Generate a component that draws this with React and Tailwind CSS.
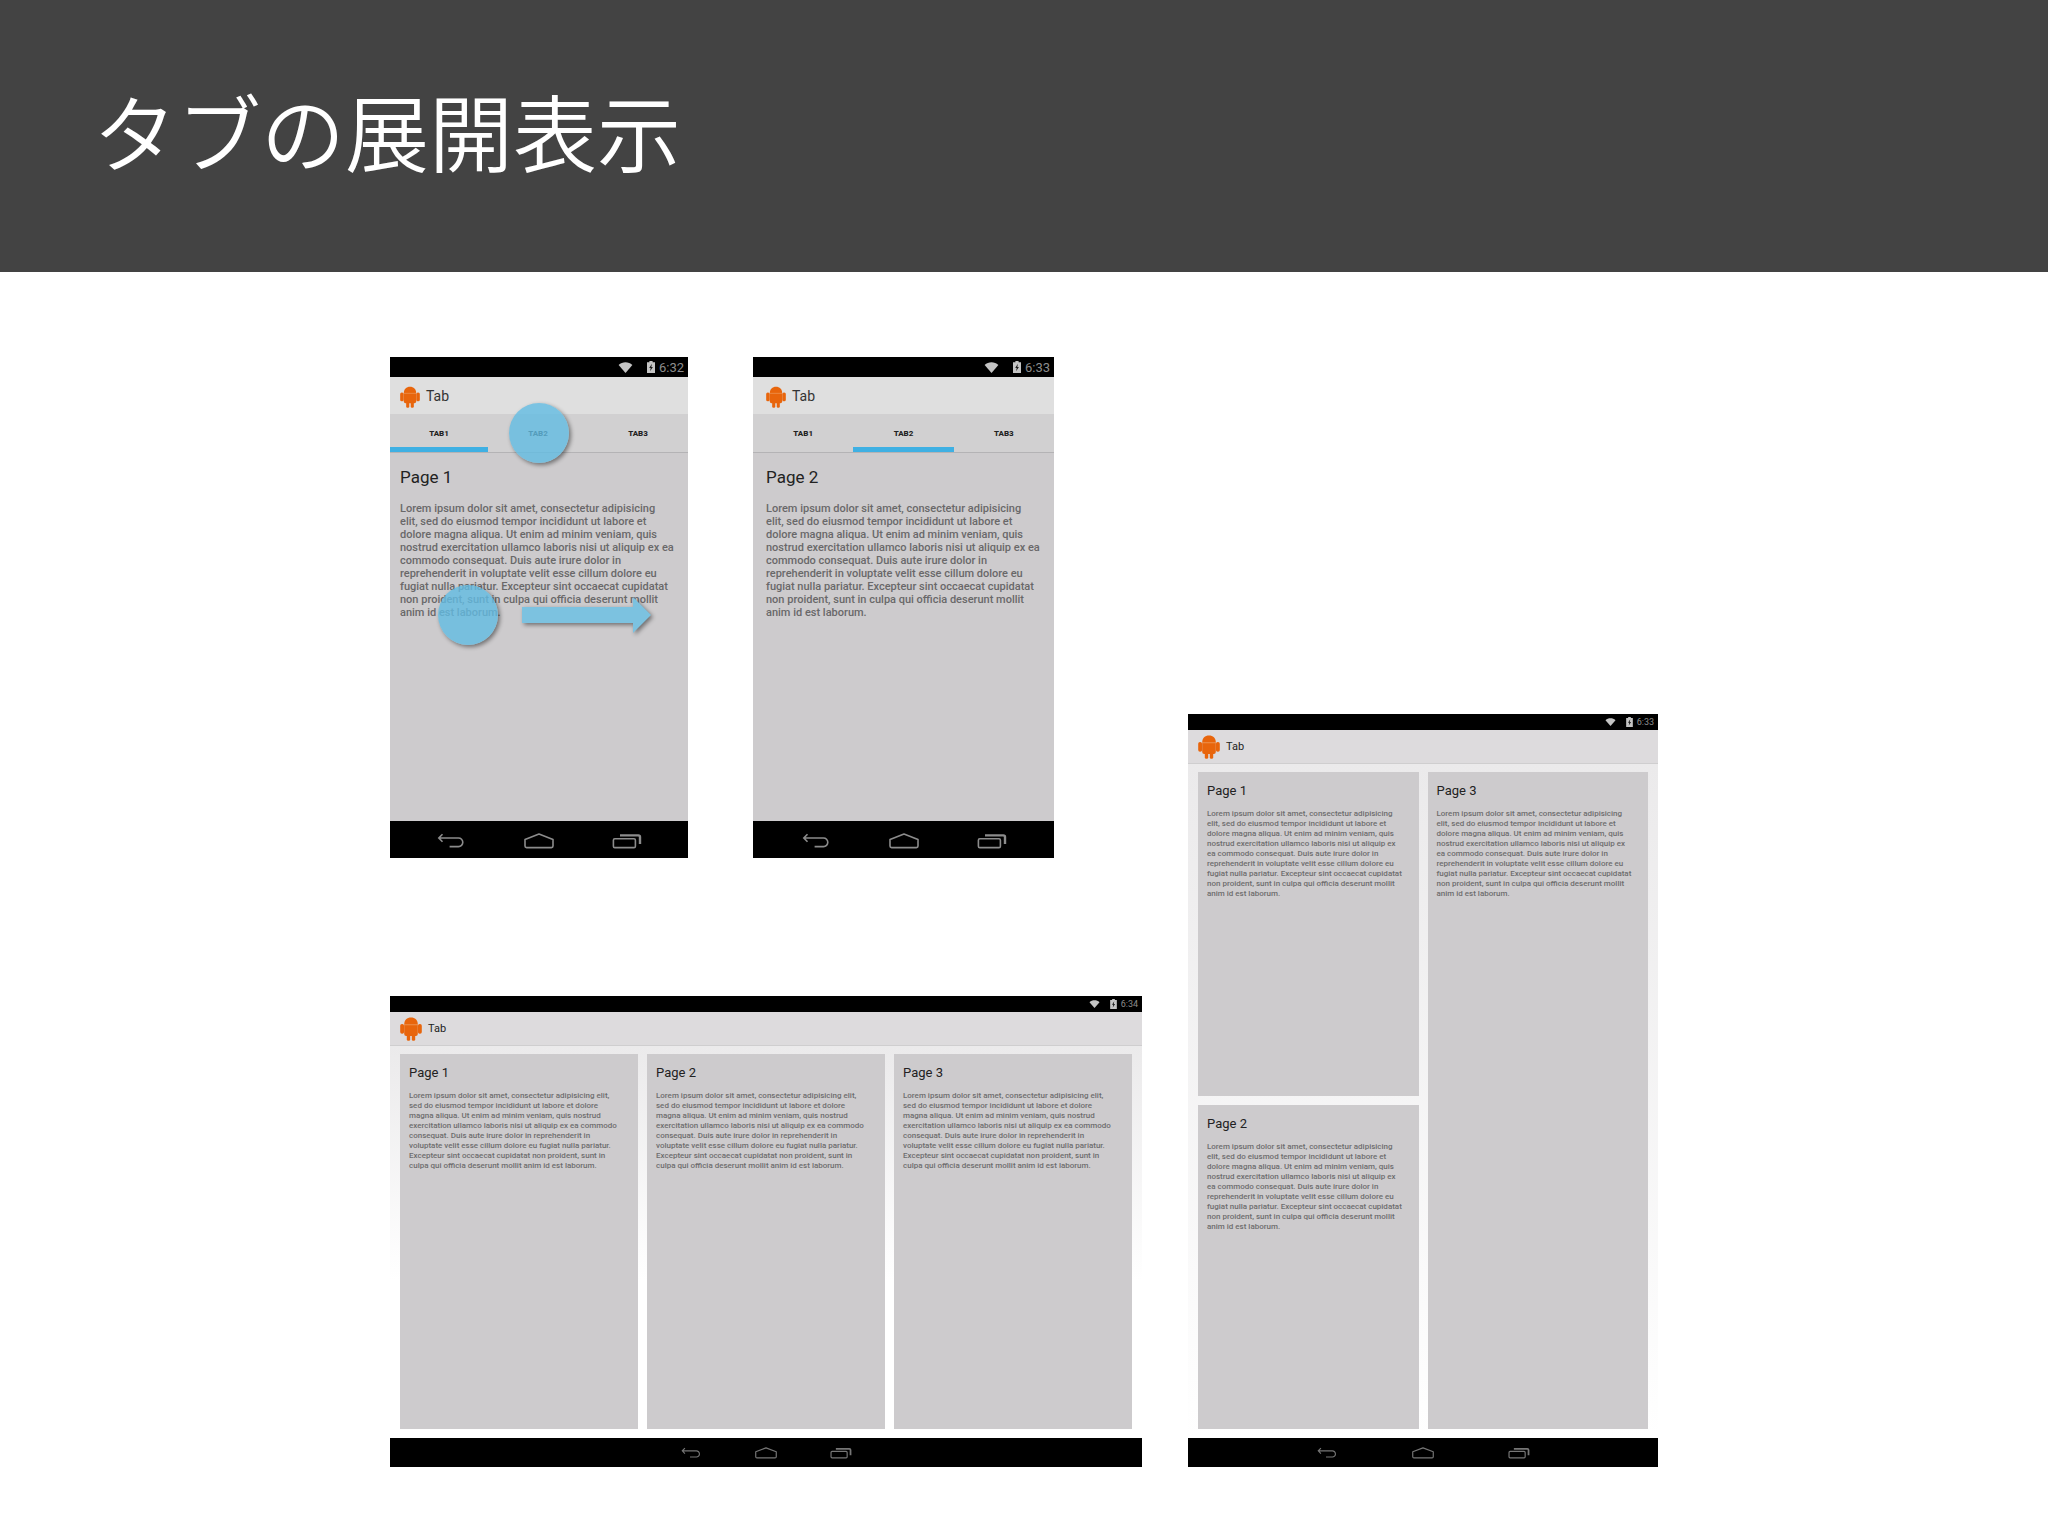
import { useState } from 'react';

const phoneLines = [
  'Lorem ipsum dolor sit amet, consectetur adipisicing',
  'elit, sed do eiusmod tempor incididunt ut labore et',
  'dolore magna aliqua. Ut enim ad minim veniam, quis',
  'nostrud exercitation ullamco laboris nisi ut aliquip ex ea',
  'commodo consequat. Duis aute irure dolor in',
  'reprehenderit in voluptate velit esse cillum dolore eu',
  'fugiat nulla pariatur. Excepteur sint occaecat cupidatat',
  'non proident, sunt in culpa qui officia deserunt mollit',
  'anim id est laborum.'
];

const portraitLines = [
  'Lorem ipsum dolor sit amet, consectetur adipisicing',
  'elit, sed do eiusmod tempor incididunt ut labore et',
  'dolore magna aliqua. Ut enim ad minim veniam, quis',
  'nostrud exercitation ullamco laboris nisi ut aliquip ex',
  'ea commodo consequat. Duis aute irure dolor in',
  'reprehenderit in voluptate velit esse cillum dolore eu',
  'fugiat nulla pariatur. Excepteur sint occaecat cupidatat',
  'non proident, sunt in culpa qui officia deserunt mollit',
  'anim id est laborum.'
];

const landscapeLines = [
  'Lorem ipsum dolor sit amet, consectetur adipisicing elit,',
  'sed do eiusmod tempor incididunt ut labore et dolore',
  'magna aliqua. Ut enim ad minim veniam, quis nostrud',
  'exercitation ullamco laboris nisi ut aliquip ex ea commodo',
  'consequat. Duis aute irure dolor in reprehenderit in',
  'voluptate velit esse cillum dolore eu fugiat nulla pariatur.',
  'Excepteur sint occaecat cupidatat non proident, sunt in',
  'culpa qui officia deserunt mollit anim id est laborum.'
];

const WifiIcon = ({ className }) => (
  <svg viewBox="0 0 16 12" className={className} fill="currentColor" aria-hidden="true">
    <path d="M0.5 3.2C2.6 1.3 5.2 0.4 8 0.4s5.4 0.9 7.5 2.8L8 12z" />
  </svg>
);

const BatteryIcon = ({ className }) => (
  <svg viewBox="0 0 8 12" className={className} aria-hidden="true">
    <path d="M2.4 0h3.2v1.2H8V12H0V1.2h2.4z" fill="currentColor" />
    <path d="M4.9 2.8L2.2 7h1.5l-.6 3.2L5.9 6H4.3z" fill="#1a1a1a" />
  </svg>
);

const AndroidIcon = ({ className }) => (
  <svg viewBox="0 0 22 24" className={className} aria-hidden="true">
    <g fill="#e8650c">
      <path d="M4.2 7.8C4.2 3 7 0.6 11 0.6s6.8 2.4 6.8 7.2z" />
      <path d="M4.2 8h13.6v9a2 2 0 0 1-2 2H6.2a2 2 0 0 1-2-2z" />
      <rect x="0.2" y="7" width="3.9" height="9.8" rx="1.8" />
      <rect x="17.9" y="7" width="3.9" height="9.8" rx="1.8" />
      <rect x="6.8" y="17" width="3.4" height="6.8" rx="1.4" />
      <rect x="11.8" y="17" width="3.4" height="6.8" rx="1.4" />
    </g>
    <path d="M4.2 7.9h13.6" stroke="#f08a3c" strokeWidth="0.8" />
  </svg>
);

const BackIcon = ({ className }) => (
  <svg viewBox="0 0 28 16" className={className} fill="none" stroke="currentColor" strokeWidth="1.6" aria-hidden="true">
    <path d="M5.5 1.2L1.8 5l3.7 3.8M2 5h19.5a4.3 4.3 0 0 1 4.3 4.3v0a4.3 4.3 0 0 1-4.3 4.3H12.6" />
  </svg>
);

const HomeIcon = ({ className }) => (
  <svg viewBox="0 0 30 16" className={className} fill="none" stroke="currentColor" strokeWidth="1.6" strokeLinejoin="round" aria-hidden="true">
    <path d="M1 6.4L15 1l14 5.4V13a1.6 1.6 0 0 1-1.6 1.6H2.6A1.6 1.6 0 0 1 1 13z" />
  </svg>
);

const RecentIcon = ({ className }) => (
  <svg viewBox="0 0 30 16" className={className} fill="none" stroke="currentColor" strokeWidth="1.6" aria-hidden="true">
    <rect x="1.4" y="5.8" width="22" height="8.8" rx="1.4" />
    <path d="M8 2.4h18.4a1.6 1.6 0 0 1 1.6 1.6v7" strokeWidth="2.4" />
  </svg>
);

const StatusBar = ({ time, small }) => (
  <div
    className={
      small
        ? 'flex h-4 items-center justify-end bg-black pr-1 text-[9px] leading-none text-[#8c8c8c]'
        : 'flex h-5 items-center justify-end bg-black pr-1 text-[13px] leading-none text-[#8c8c8c]'
    }
  >
    <WifiIcon className={small ? 'mr-2.5 h-2 w-[11px] text-[#c4c4c4]' : 'mr-3.5 h-[11px] w-[15px] text-[#c4c4c4]'} />
    <BatteryIcon className={small ? 'mr-1 h-[10px] w-[7px] text-[#c4c4c4]' : 'mr-1 h-3 w-2 text-[#c4c4c4]'} />
    <span>{time}</span>
  </div>
);

const NavBar = ({ small, className }) => (
  <div
    className={
      small
        ? 'flex h-[29px] items-center justify-center bg-black text-[#767676]'
        : 'flex h-[37px] items-center justify-center bg-black pt-0.5 text-[#8c8c8c]'
    }
  >
    <div className={`grid grid-cols-3 justify-items-center ${className}`}>
      <button type="button" aria-label="Back">
        <BackIcon className={small ? 'h-3 w-5' : 'h-4 w-7'} />
      </button>
      <button type="button" aria-label="Home">
        <HomeIcon className={small ? 'h-3 w-[22px]' : 'h-4 w-[30px]'} />
      </button>
      <button type="button" aria-label="Recent apps">
        <RecentIcon className={small ? 'h-3 w-[22px]' : 'h-4 w-[30px]'} />
      </button>
    </div>
  </div>
);

const Lines = ({ lines, className }) => (
  <p className={className}>
    {lines.map((line) => (
      <span key={line} className="block whitespace-nowrap">
        {line}
      </span>
    ))}
  </p>
);

const Phone = ({ time, initialPage, cropped, children }) => {
  const [page, setPage] = useState(initialPage);

  return (
    <section className={cropped ? 'relative w-[298px]' : 'relative w-[301px]'}>
      <StatusBar time={time} />
      <div
        className={
          cropped
            ? 'flex h-[37px] items-center gap-1.5 bg-[#dfdfdf] pt-0.5 pl-2.5'
            : 'flex h-[37px] items-center gap-1.5 bg-[#dfdfdf] pt-0.5 pl-[13px]'
        }
      >
        <AndroidIcon className="h-[22px] w-5" />
        <span className="text-[14px] text-[#333]">Tab</span>
      </div>
      <div
        className={
          cropped
            ? 'grid h-[39px] grid-cols-[98fr_100fr_100fr] border-b border-[#b4b3b5] bg-[#d1d0d1]'
            : 'grid h-[39px] grid-cols-3 border-b border-[#b4b3b5] bg-[#d1d0d1]'
        }
      >
        {[1, 2, 3].map((n) => (
          <button
            key={n}
            type="button"
            onClick={() => setPage(n)}
            className={
              page === n
                ? 'border-t-[6px] border-b-[5px] border-t-transparent border-b-[#3fb0e3] text-[8px] font-extrabold text-[#222]'
                : 'border-t-[6px] border-b-[5px] border-transparent text-[8px] font-extrabold text-[#222]'
            }
          >
            TAB{n}
          </button>
        ))}
      </div>
      <div className={cropped ? 'h-[368px] bg-[#cdcbcd] pt-3.5 pl-2.5' : 'h-[368px] bg-[#cdcbcd] pt-3.5 pl-[13px]'}>
        <h2 className="text-[17px] leading-5 text-[#222]">Page {page}</h2>
        <Lines lines={phoneLines} className="mt-[15px] text-[11px] leading-[13px] font-medium text-[#696869]" />
      </div>
      <NavBar className="w-[264px]" />
      {children}
    </section>
  );
};

const Card = ({ page, lines, className }) => (
  <article className={`bg-[#cdcbcd] pt-[11px] pl-[9px] ${className || ''}`}>
    <h2 className="text-[13px] leading-4 text-[#222]">Page {page}</h2>
    <Lines lines={lines} className="mt-2.5 text-[8px] leading-[10px] font-medium text-[#6e6d6e]" />
  </article>
);

const Tablet = ({ time, className, navClassName, children }) => (
  <section className={className}>
    <StatusBar time={time} small />
    <div className="flex h-[34px] items-center gap-1.5 border-b border-[#cfcecf] bg-[#dddbdd] pt-px pl-2.5">
      <AndroidIcon className="h-6 w-[22px]" />
      <span className="text-[11px] text-[#222]">Tab</span>
    </div>
    {children}
    <NavBar small className={navClassName} />
  </section>
);

const App = () => {
  return (
    <div className="min-h-screen bg-white font-[Roboto,'Noto_Sans_CJK_JP',sans-serif]">
      <header className="flex h-[272px] items-center bg-[#434343] px-[93px] pb-3">
        <h1 className="font-['Noto_Sans_CJK_JP',sans-serif] text-[84px] leading-[84px] font-[350] text-white">
          タブの展開表示
        </h1>
      </header>

      <main className="mx-auto flex max-w-[1268px] items-end justify-between pt-[85px] pb-[69px]">
        <div className="w-[752px]">
          <div className="mb-[138px] flex gap-[65px]">
            <Phone time="6:32" initialPage={1} cropped>
              <div className="pointer-events-none absolute top-[46px] left-[119px] size-[60px] rounded-full bg-[#62bbe2]/80 shadow-[2px_2px_4px_rgba(0,0,0,0.45)]" />
              <div className="pointer-events-none absolute top-[228px] left-[48px] size-[60px] rounded-full bg-[#62bbe2]/80 shadow-[2px_2px_4px_rgba(0,0,0,0.45)]" />
              <svg
                viewBox="0 0 132 38"
                className="pointer-events-none absolute top-[239px] left-[131px] h-[38px] w-[132px] overflow-visible drop-shadow-[2px_2px_2px_rgba(0,0,0,0.45)]"
                aria-hidden="true"
              >
                <path d="M1 11h111V1l18 18-18 18V27H1z" fill="#7cc2e0" />
              </svg>
            </Phone>
            <Phone time="6:33" initialPage={2} />
          </div>

          <Tablet time="6:34" navClassName="w-[225px]">
            <div className="grid h-[392px] grid-cols-3 gap-[9px] bg-linear-to-b from-[#ebeaeb] to-white to-60% px-2.5 pt-2 pb-[9px]">
              <Card page={1} lines={landscapeLines} />
              <Card page={2} lines={landscapeLines} />
              <Card page={3} lines={landscapeLines} />
            </div>
          </Tablet>
        </div>

        <Tablet time="6:33" className="w-[470px]" navClassName="w-[287px]">
          <div className="grid h-[674px] grid-cols-2 grid-rows-2 gap-[9px] bg-linear-to-b from-[#ebeaeb] to-white px-2.5 pt-2 pb-[9px]">
            <Card page={1} lines={portraitLines} />
            <Card page={3} lines={portraitLines} className="row-span-2" />
            <Card page={2} lines={portraitLines} />
          </div>
        </Tablet>
      </main>
    </div>
  );
};

export default App;
